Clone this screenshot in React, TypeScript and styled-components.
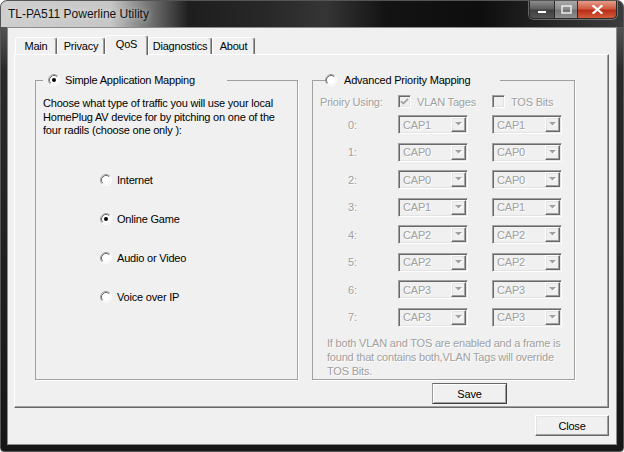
import React from 'react';
import styled, { createGlobalStyle, css } from 'styled-components';

const GlobalStyle = createGlobalStyle`
  html, body {
    margin: 0;
    padding: 0;
    background: #ffffff;
  }
  body {
    font-family: 'Liberation Sans', Arial, sans-serif;
  }
`;

// classic 3D borders
const raised = css`
  border: 1px solid;
  border-color: #ffffff #696969 #696969 #ffffff;
  box-shadow: inset -1px -1px 0 #a0a0a0, inset 1px 1px 0 #e3e3e3;
`;

const sunken = css`
  border: 1px solid;
  border-color: #a0a0a0 #ffffff #ffffff #a0a0a0;
  box-shadow: inset 1px 1px 0 #696969, inset -1px -1px 0 #e3e3e3;
`;

const uiText = css`
  font-family: 'Liberation Sans', Arial, sans-serif;
  font-size: 11px;
  letter-spacing: -0.2px;
  white-space: nowrap;
`;

const Window = styled.div`
  box-sizing: border-box;
  width: 624px;
  height: 452px;
  display: flex;
  flex-direction: column;
  background: linear-gradient(180deg, #6c6c6c 0px, #2a2a2a 70px, #161616 100%);
  border: 1px solid #555555;
  border-radius: 7px 7px 4px 4px;
  overflow: hidden;
`;

const TitleBar = styled.div`
  height: 26px;
  flex: none;
  display: flex;
  align-items: center;
  padding-left: 7px;
  background: linear-gradient(
    90deg,
    #cfcfcf 0px,
    #c6c6c6 110px,
    #707070 150px,
    #1e1e1e 188px,
    #272727 260px,
    #353535 325px,
    #131313 385px,
    #0e0e0e 480px,
    #2a2a2a 560px,
    #3c3c3c 622px
  );
`;

const Title = styled.span`
  font-family: 'Liberation Sans', Arial, sans-serif;
  font-size: 12px;
  color: #121212;
  text-shadow: 0 0 6px rgba(255, 255, 255, 0.7);
`;

const CaptionGroup = styled.div`
  align-self: flex-start;
  margin-left: auto;
  margin-right: 6px;
  display: flex;
  height: 17px;
  border: 1px solid #2b2b2b;
  border-top: none;
  border-radius: 0 0 5px 5px;
  overflow: hidden;
  box-shadow: 0 0 0 1px rgba(190, 190, 190, 0.45);
`;

const captionBg = {
  min: 'linear-gradient(180deg, #8c8c8c, #5e5e5e 45%, #3f3f3f 55%, #565656)',
  max: 'linear-gradient(180deg, #a8a8a8, #8c8c8c 45%, #747474 55%, #8e8e8e)',
  close: 'linear-gradient(180deg, #e59c88, #d05b43 45%, #ba2e18 55%, #d25c3c)',
};

const CaptionButton = styled.div<{ $kind: 'min' | 'max' | 'close'; $w: number }>`
  width: ${(p) => p.$w}px;
  display: flex;
  align-items: center;
  justify-content: center;
  background: ${(p) => captionBg[p.$kind]};
  & + & {
    border-left: 1px solid #2b2b2b;
  }
`;

const Frame = styled.div`
  flex: 1;
  display: flex;
  padding: 0 6px 6px;
`;

const Client = styled.div`
  flex: 1;
  display: flex;
  flex-direction: column;
  background: #f0f0f0;
  border: 1px solid #8c8c8c;
  padding: 7px 7px 0 6px;
`;

const TabStrip = styled.div`
  height: 19px;
  display: flex;
  align-items: flex-end;
  padding-left: 1px;
`;

const Tab = styled.div<{ $active?: boolean; $w: number }>`
  ${uiText};
  box-sizing: border-box;
  width: ${(p) => p.$w}px;
  height: ${(p) => (p.$active ? 20 : 17)}px;
  margin-bottom: ${(p) => (p.$active ? -1 : 0)}px;
  padding-bottom: ${(p) => (p.$active ? 3 : 0)}px;
  position: relative;
  z-index: ${(p) => (p.$active ? 1 : 0)};
  display: flex;
  align-items: center;
  justify-content: center;
  color: #000;
  background: #f0f0f0;
  border: 1px solid;
  border-bottom: none;
  border-color: #ffffff #696969 transparent #ffffff;
  border-radius: 3px 3px 0 0;
  box-shadow: inset -1px 0 0 #a0a0a0;
`;

const Panel = styled.div`
  box-sizing: border-box;
  width: 595px;
  height: 354px;
  border: 1px solid;
  border-color: #ffffff #696969 #696969 #ffffff;
  box-shadow: inset -1px -1px 0 #a0a0a0;
  padding: 18px 0 0 20px;
  display: grid;
  grid-template-columns: 263px 263px;
  column-gap: 14px;
  align-content: start;
`;

const GroupBox = styled.fieldset`
  box-sizing: border-box;
  height: 307px;
  min-width: 0;
  margin: 0;
  padding: 0;
  border: 1px solid #a0a0a0;
  box-shadow: 1px 1px 0 #ffffff;
`;

const Legend = styled.legend<{ $left: number; $width: number; $pad: number }>`
  box-sizing: border-box;
  margin-left: ${(p) => p.$left}px;
  width: ${(p) => p.$width}px;
  height: 14px;
  padding: 0 0 0 ${(p) => p.$pad}px;
`;

const Option = styled.label<{ $gap?: number; $disabled?: boolean }>`
  ${uiText};
  display: flex;
  align-items: center;
  gap: ${(p) => p.$gap ?? 5}px;
  height: 14px;
  color: ${(p) => (p.$disabled ? '#a0a0a0' : '#000')};
  text-shadow: ${(p) => (p.$disabled ? '1px 1px 0 #fff' : 'none')};
`;

const Description = styled.p`
  ${uiText};
  margin: 0;
  padding: 10px 0 0 7px;
  line-height: 13.5px;
  color: #000;
`;

const RadioList = styled.div`
  display: flex;
  flex-direction: column;
  gap: 25px;
  margin: 35px 0 0 64px;
`;

const OptionsGrid = styled.div`
  display: grid;
  grid-template-columns: 85px 94px 1fr;
  grid-template-rows: 18.5px repeat(8, 27.5px);
  align-items: center;
  padding-top: 5.5px;
`;

const GrayText = styled.span<{ $indent?: number }>`
  ${uiText};
  padding-left: ${(p) => p.$indent ?? 0}px;
  color: #a0a0a0;
  text-shadow: 1px 1px 0 #ffffff;
`;

const CheckBox = styled.span`
  box-sizing: border-box;
  width: 13px;
  height: 13px;
  flex: none;
  display: flex;
  align-items: center;
  justify-content: center;
  background: #f0f0f0;
  ${sunken};
`;

const Combo = styled.div`
  box-sizing: border-box;
  width: 70px;
  height: 19px;
  display: flex;
  align-items: center;
  padding: 1px 1px 1px 4px;
  background: #f0f0f0;
  ${sunken};
`;

const ComboText = styled.span`
  ${uiText};
  flex: 1;
  color: #a0a0a0;
  text-shadow: 1px 1px 0 #ffffff;
`;

const DropButton = styled.span`
  box-sizing: border-box;
  width: 15px;
  height: 15px;
  display: flex;
  align-items: center;
  justify-content: center;
  background: #f0f0f0;
  ${raised};
`;

const Note = styled.p`
  ${uiText};
  margin: 5px 0 0 14px;
  line-height: 14px;
  color: #a0a0a0;
  text-shadow: 1px 1px 0 #ffffff;
`;

const PushButton = styled.button<{ $w: number; $default?: boolean }>`
  ${uiText};
  box-sizing: border-box;
  width: ${(p) => p.$w}px;
  height: 21px;
  padding: 0;
  color: #000;
  background: #f0f0f0;
  ${raised};
  ${(p) =>
    p.$default &&
    css`
      border-color: #696969 #404040 #404040 #9a9a9a;
      box-shadow: inset 1px 1px 0 #ffffff, inset -1px -1px 0 #a0a0a0;
    `}
`;

const SaveButton = styled(PushButton)`
  grid-column: 2;
  justify-self: start;
  margin: 3px 0 0 120px;
`;

const CloseButton = styled(PushButton)`
  align-self: flex-end;
  margin: 7px 0 0;
`;

const RadioMark = ({ checked }: { checked?: boolean }) => (
  <svg width="12" height="12" viewBox="0 0 12 12" style={{ flex: 'none' }}>
    <circle cx="6" cy="6" r="5" fill="#ffffff" />
    <path d="M2.11 9.89A5.5 5.5 0 0 1 9.89 2.11" fill="none" stroke="#a0a0a0" />
    <path d="M2.82 9.18A4.5 4.5 0 0 1 9.18 2.82" fill="none" stroke="#696969" />
    <path d="M9.89 2.11A5.5 5.5 0 0 1 2.11 9.89" fill="none" stroke="#ffffff" />
    <path d="M9.18 2.82A4.5 4.5 0 0 1 2.82 9.18" fill="none" stroke="#f4f4f4" />
    {checked && <circle cx="6" cy="6" r="2" fill="#000000" />}
  </svg>
);

const CheckMark = () => (
  <svg width="9" height="9" viewBox="0 0 9 9">
    <path d="M1 4.2 L3.3 6.5 L8 1.8" fill="none" stroke="#a0a0a0" strokeWidth="1.7" />
  </svg>
);

const ArrowDown = () => (
  <svg width="8" height="5" viewBox="0 0 8 5">
    <path d="M1 1 H8 L4.5 4.5 Z" fill="#ffffff" />
    <path d="M0 0 H7 L3.5 3.5 Z" fill="#a0a0a0" />
  </svg>
);

const MinGlyph = () => (
  <svg width="10" height="8" viewBox="0 0 10 8">
    <rect x="0.5" y="4.5" width="9" height="3" fill="#ffffff" stroke="#333" strokeWidth="0.8" />
  </svg>
);

const MaxGlyph = () => (
  <svg width="11" height="9" viewBox="0 0 11 9">
    <rect x="1" y="1" width="9" height="7" fill="none" stroke="#e6e6e6" strokeWidth="1.6" />
  </svg>
);

const CloseGlyph = () => (
  <svg width="11" height="9" viewBox="0 0 11 9">
    <path d="M1.5 1 L9.5 8 M9.5 1 L1.5 8" stroke="#ffffff" strokeWidth="2.2" strokeLinecap="square" />
  </svg>
);

const tabs = [
  { label: 'Main', w: 42 },
  { label: 'Privacy', w: 48 },
  { label: 'QoS', w: 43, active: true },
  { label: 'Diagnostics', w: 64 },
  { label: 'About', w: 43 },
];

const apps = [
  { label: 'Internet' },
  { label: 'Online Game', checked: true },
  { label: 'Audio or Video' },
  { label: 'Voice over IP' },
];

const priorities = [
  ['CAP1', 'CAP1'],
  ['CAP0', 'CAP0'],
  ['CAP0', 'CAP0'],
  ['CAP1', 'CAP1'],
  ['CAP2', 'CAP2'],
  ['CAP2', 'CAP2'],
  ['CAP3', 'CAP3'],
  ['CAP3', 'CAP3'],
];

const ComboBox = ({ value }: { value: string }) => (
  <Combo>
    <ComboText>{value}</ComboText>
    <DropButton>
      <ArrowDown />
    </DropButton>
  </Combo>
);

const App: React.FC = () => {
  return (
    <>
      <GlobalStyle />
      <Window>
        <TitleBar>
          <Title>TL-PA511 Powerline Utility</Title>
          <CaptionGroup>
            <CaptionButton $kind="min" $w={24}>
              <MinGlyph />
            </CaptionButton>
            <CaptionButton $kind="max" $w={22}>
              <MaxGlyph />
            </CaptionButton>
            <CaptionButton $kind="close" $w={38}>
              <CloseGlyph />
            </CaptionButton>
          </CaptionGroup>
        </TitleBar>

        <Frame>
          <Client>
            <TabStrip>
              {tabs.map((tab) => (
                <Tab key={tab.label} $w={tab.w} $active={tab.active}>
                  {tab.label}
                </Tab>
              ))}
            </TabStrip>

            <Panel>
              <GroupBox>
                <Legend $left={7} $width={184} $pad={5}>
                  <Option>
                    <RadioMark checked />
                    Simple Application Mapping
                  </Option>
                </Legend>
                <Description>
                  Choose what type of traffic you will use your local
                  <br />
                  HomePlug AV device for by pitching on one of the
                  <br />
                  four radils (choose one only ):
                </Description>
                <RadioList>
                  {apps.map((app) => (
                    <Option key={app.label}>
                      <RadioMark checked={app.checked} />
                      {app.label}
                    </Option>
                  ))}
                </RadioList>
              </GroupBox>

              <GroupBox>
                <Legend $left={12} $width={175} $pad={0}>
                  <Option $gap={7}>
                    <RadioMark />
                    Advanced Priority Mapping
                  </Option>
                </Legend>
                <OptionsGrid>
                  <GrayText $indent={7}>Prioiry Using:</GrayText>
                  <Option $gap={6} $disabled>
                    <CheckBox>
                      <CheckMark />
                    </CheckBox>
                    VLAN Tages
                  </Option>
                  <Option $gap={6} $disabled>
                    <CheckBox />
                    TOS Bits
                  </Option>
                  {priorities.map(([vlan, tos], i) => (
                    <React.Fragment key={i}>
                      <GrayText $indent={35}>{i}:</GrayText>
                      <ComboBox value={vlan} />
                      <ComboBox value={tos} />
                    </React.Fragment>
                  ))}
                </OptionsGrid>
                <Note>
                  If both VLAN and TOS are enabled and a frame is
                  <br />
                  found that contains both,VLAN Tags will override
                  <br />
                  TOS Bits.
                </Note>
              </GroupBox>

              <SaveButton $w={75} $default>
                Save
              </SaveButton>
            </Panel>

            <CloseButton $w={74}>Close</CloseButton>
          </Client>
        </Frame>
      </Window>
    </>
  );
};

export default App;
